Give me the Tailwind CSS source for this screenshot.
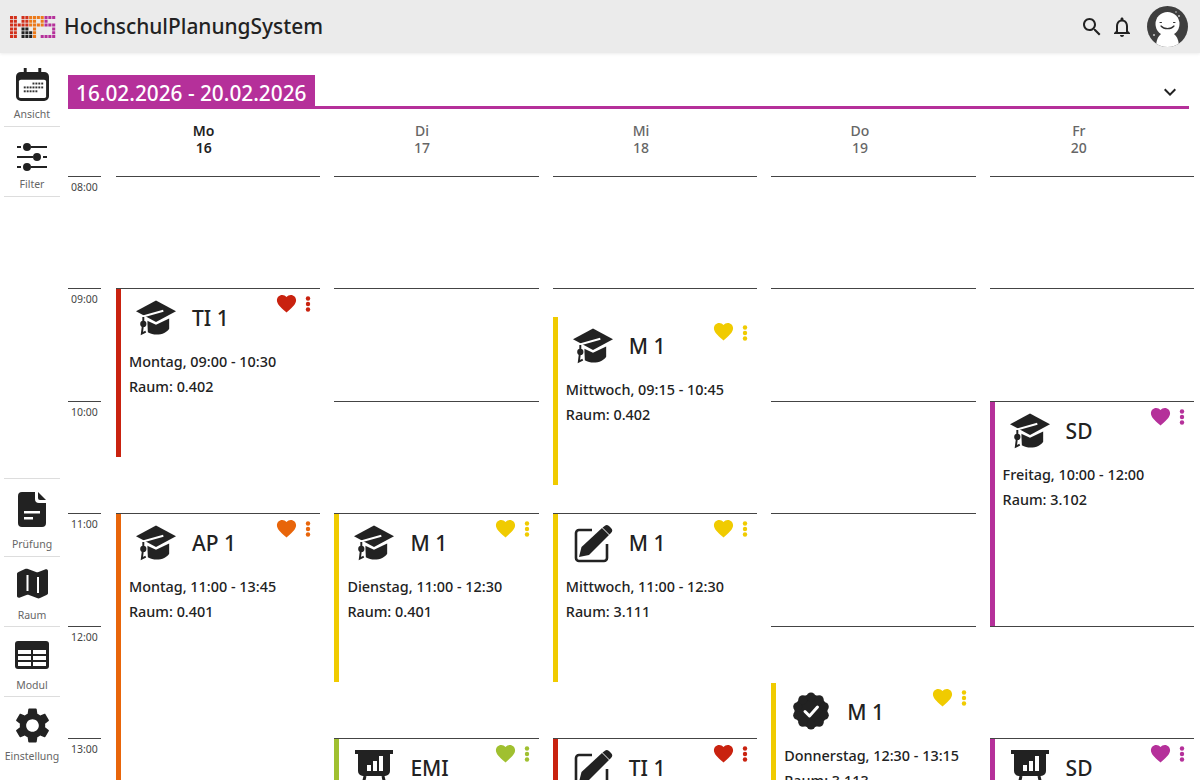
<!DOCTYPE html>
<html lang="de">
<head>
  <meta charset="UTF-8" />
  <meta name="viewport" content="width=device-width, initial-scale=1.0" />
  <title>HochschulPlanungSystem</title>
  <script src="https://cdn.jsdelivr.net/npm/@tailwindcss/browser@4"></script>
</head>
<body class="h-[780px] overflow-hidden bg-white font-['Noto_Sans',sans-serif] text-[#222]">

  <!-- Icons -->
  <svg class="hidden">
    <symbol id="heart" viewBox="0 0 24 24"><path fill="currentColor" d="M12 21.35l-1.45-1.32C5.4 15.36 2 12.28 2 8.5 2 5.42 4.42 3 7.5 3c1.74 0 3.41.81 4.5 2.09C13.09 3.81 14.76 3 16.5 3 19.58 3 22 5.42 22 8.5c0 3.78-3.4 6.86-8.55 11.54L12 21.35z"/></symbol>
    <symbol id="dots" viewBox="0 0 6 16"><g fill="currentColor"><circle cx="3" cy="2.500" r="2.200"/><circle cx="3" cy="8" r="2.200"/><circle cx="3" cy="13.500" r="2.200"/></g></symbol>
    <symbol id="cap" viewBox="0 0 41 40">
      <path fill="#222" d="M20.500 1 41 12 20.500 23 0 12z"/>
      <path fill="#222" d="M11 21.500 20.500 26 34 19.500V30c-2 3.500-7 6-13 6-3 0-6-.8-9-2.500z"/>
      <path fill="none" stroke="#fff" stroke-width="2" d="M28 11.500 7 17.500 11 21"/>
      <path fill="none" stroke="#fff" stroke-width="1.500" d="M11 21v15"/>
      <circle cx="7.500" cy="25" r="3.200" fill="#222"/>
      <path fill="none" stroke="#222" stroke-width="2" d="M7.500 18v6M7 27l-1 8 4-2"/>
    </symbol>
    <symbol id="edit" viewBox="0 0 40 40">
      <path fill="none" stroke="#222" stroke-width="2.600" stroke-linejoin="round" d="M19 6H6a3 3 0 0 0-3 3v25a3 3 0 0 0 3 3h25a3 3 0 0 0 3-3V20"/>
      <path fill="#222" d="M29 4 36 11 16 31 6 33 8.500 23z"/>
      <path fill="#222" d="M31 2.500a3.500 3.500 0 0 1 5-.5l2 2a3.500 3.500 0 0 1 0 5l-1.500 1.500-7-7z"/>
    </symbol>
    <symbol id="board" viewBox="0 0 40 40">
      <path fill="#222" d="M1 1h38v4h-3v17a5 5 0 0 1-5 5H9a5 5 0 0 1-5-5V5H1z"/>
      <path fill="#fff" d="M13 16h4v6h-4zM19 12h4v10h-4zM25 7h4v15h-4z"/>
      <path fill="none" stroke="#222" stroke-width="3" d="M11 27 8 40M29 27l3 13M9 34h22"/>
    </symbol>
    <symbol id="badge" viewBox="0 0 40 40">
      <g fill="#222">
        <circle cx="20" cy="20" r="16.500"/>
        <circle cx="20" cy="6" r="4.500"/><circle cx="28.200" cy="8.700" r="4.500"/><circle cx="33.300" cy="15.700" r="4.500"/><circle cx="33.300" cy="24.300" r="4.500"/><circle cx="28.200" cy="31.300" r="4.500"/>
        <circle cx="20" cy="34" r="4.500"/><circle cx="11.800" cy="31.300" r="4.500"/><circle cx="6.700" cy="24.300" r="4.500"/><circle cx="6.700" cy="15.700" r="4.500"/><circle cx="11.800" cy="8.700" r="4.500"/>
      </g>
      <path fill="none" stroke="#fff" stroke-width="3" stroke-linecap="round" stroke-linejoin="round" d="M14 20.500l4.500 4.500 8-9"/>
    </symbol>
  </svg>

  <!-- Top bar -->
  <header class="flex h-[53px] items-center bg-[#ebebeb] pl-[10px] pr-[12px] shadow-[0_1px_3px_rgba(0,0,0,0.08)]">
    <svg width="46" height="24" viewBox="0 0 48 24" fill="none" stroke-width="3.200" stroke-dasharray="3.200 .8">
      <path stroke="#d2301c" d="M0 2h8M0 6h8M0 10h20M0 14h8M0 18h8M0 22h8M12 2h8M12 6h8"/>
      <path stroke="#222" d="M12 14h8M12 18h12M12 22h12"/>
      <path stroke="#ec7a1a" d="M20 2h16M20 6h8M32 6h4M20 10h16M24 14h4M24 18h4M24 22h4"/>
      <path stroke="#b5309a" d="M36 2h12M36 10h12M36 6h4M44 14h4M44 18h4M32 22h16"/>
    </svg>
    <span class="ml-2 text-[20.9px] leading-none font-medium text-[#222]">HochschulPlanungSystem</span>
    <div class="ml-auto flex items-center">
      <svg class="h-6 w-6" viewBox="0 0 24 24"><path fill="#222" d="M15.500 14h-.79l-.28-.27C15.410 12.590 16 11.110 16 9.500 16 5.910 13.090 3 9.500 3S3 5.910 3 9.500 5.910 16 9.500 16c1.610 0 3.090-.59 4.230-1.570l.27.28v.79l5 4.990L20.490 19l-4.990-5zm-6 0C7.010 14 5 11.990 5 9.500S7.010 5 9.500 5 14 7.010 14 9.500 11.990 14 9.500 14z"/></svg>
      <svg class="ml-[6px] h-6 w-6" viewBox="0 0 24 24"><path fill="#222" d="M12 22c1.100 0 2-.9 2-2h-4c0 1.100.9 2 2 2zm6-6v-5c0-3.070-1.630-5.640-4.500-6.320V4c0-.83-.67-1.500-1.500-1.500s-1.500.67-1.500 1.500v.68C7.640 5.360 6 7.920 6 11v5l-2 2v1h16v-1l-2-2zm-2 1H8v-6c0-2.480 1.510-4.500 4-4.500s4 2.020 4 4.500v6z"/></svg>
      <svg class="ml-[13px] h-[41px] w-[41px]" viewBox="0 0 41 41">
        <clipPath id="avatarClip"><circle cx="20.500" cy="20.500" r="20.500"/></clipPath>
        <g clip-path="url(#avatarClip)">
          <rect width="41" height="41" fill="#3f3f3f"/>
          <path fill="#fff" d="M9 41c0-10 5-15 11.500-15S32 31 32 41z"/>
          <circle cx="20.500" cy="18" r="12" fill="#fff"/>
          <path fill="none" stroke="#333" stroke-width="1.200" stroke-linecap="round" d="M14 20c3 3.500 10 3.500 13 0"/>
          <path stroke="#333" stroke-linecap="round" d="M13 16.500h1.500M26.500 16.500H28"/>
          <circle cx="32" cy="10" r="1" fill="#ccc"/><circle cx="7" cy="29" r="1" fill="#ccc"/><circle cx="29" cy="6" r=".8" fill="#ccc"/>
        </g>
      </svg>
    </div>
  </header>

  <div class="flex h-[727px] overflow-hidden">

    <!-- Side navigation -->
    <aside class="flex w-[68px] shrink-0 flex-col justify-between pb-[13px] pl-[4px] pr-[8px] text-[10.5px] leading-[15px] text-[#666]">
      <div>
        <div class="flex h-[74px] flex-col items-center border-b border-[#ddd] pt-[15px]">
          <svg class="h-[33px] w-[33px]" viewBox="0 0 34 34">
            <path fill="#222" d="M8 0h3v4h12V0h3v4h3a5 5 0 0 1 5 5v20a5 5 0 0 1-5 5H5a5 5 0 0 1-5-5V9a5 5 0 0 1 5-5h3z"/>
            <rect x="3" y="12" width="28" height="19" rx="2" fill="#fff"/>
            <g fill="#333"><rect x="17" y="15" width="2" height="2"/><rect x="20" y="15" width="2" height="2"/><rect x="23" y="15" width="2" height="2"/><rect x="26" y="15" width="2" height="2"/><rect x="8" y="19" width="2" height="2"/><rect x="11" y="19" width="2" height="2"/><rect x="14" y="19" width="2" height="2"/><rect x="17" y="19" width="2" height="2"/><rect x="20" y="19" width="2" height="2"/><rect x="23" y="19" width="2" height="2"/><rect x="26" y="19" width="2" height="2"/><rect x="8" y="23" width="2" height="2"/><rect x="11" y="23" width="2" height="2"/><rect x="14" y="23" width="2" height="2"/><rect x="17" y="23" width="2" height="2"/><rect x="20" y="23" width="2" height="2"/></g>
          </svg>
          <span class="mt-[6px]">Ansicht</span>
        </div>
        <div class="flex h-[70px] flex-col items-center border-b border-[#ddd] pt-[16px]">
          <svg class="h-[28px] w-[30px]" viewBox="0 0 30 28" fill="none" stroke="#222" stroke-width="2">
            <path d="M0 4h4M14 4h16M0 14h16M26 14h4M0 24h4M14 24h16"/>
            <circle cx="10" cy="4" r="3" fill="#222"/><circle cx="20" cy="14" r="3" fill="#222"/><circle cx="10" cy="24" r="3" fill="#222"/>
          </svg>
          <span class="mt-[6px]">Filter</span>
        </div>
      </div>
      <div class="border-t border-[#ddd]">
        <div class="flex h-[78px] flex-col items-center border-b border-[#ddd] pt-[13px]">
          <svg class="h-[35px] w-[28px]" viewBox="0 0 28 35">
            <path fill="#222" d="M4 0h13v7a4 4 0 0 0 4 4h7v20a4 4 0 0 1-4 4H4a4 4 0 0 1-4-4V4a4 4 0 0 1 4-4z"/>
            <path fill="#222" d="M20 0l8 8h-6a2 2 0 0 1-2-2z"/>
            <path fill="#fff" d="M6 19h16v2.500H6zM6 25h9v2.500H6z"/>
          </svg>
          <span class="mt-[10px]">Prüfung</span>
        </div>
        <div class="flex h-[70px] flex-col items-center border-b border-[#ddd] pt-[11px]">
          <svg class="h-[32px] w-[32px]" viewBox="0 0 32 32">
            <path fill="#222" d="M1 6c0-1 .5-1.500 1.500-2L9 1c1-.5 2-.5 3 0l8 3c1 .4 1.500.3 2.500 0L29 1.500C30.500 1 32 1.500 32 3v22c0 1-.5 1.500-1.500 2L24 30c-1 .5-2 .5-3 0l-8-3c-1-.4-1.500-.3-2.500 0L4 29.500C2.500 30 1 29.500 1 28z"/>
            <path fill="#fff" d="M10.500 7h2v16h-2zM21 9h2v16h-2z"/>
          </svg>
          <span class="mt-[8px]">Raum</span>
        </div>
        <div class="flex h-[70px] flex-col items-center border-b border-[#ddd] pt-[14px]">
          <svg class="h-[28px] w-[34px]" viewBox="0 0 34 28">
            <rect width="34" height="28" rx="3" fill="#222"/>
            <path fill="#fff" d="M3 9h13v4H3zM18 9h13v4H18zM3 15h13v4H3zM18 15h13v4H18zM3 21h13v4H3zM18 21h13v4H18z"/>
          </svg>
          <span class="mt-[9px]">Modul</span>
        </div>
        <div class="flex h-[70px] flex-col items-center pt-[10px]">
          <svg class="h-[37px] w-[37px]" viewBox="1.500 1.500 21 21"><path fill="#222" d="M19.140 12.940c.04-.3.06-.61.06-.94 0-.32-.02-.64-.07-.94l2.030-1.580c.18-.14.23-.41.12-.61l-1.920-3.320c-.12-.22-.37-.29-.59-.22l-2.390.96c-.5-.38-1.030-.7-1.620-.94l-.36-2.540c-.04-.24-.24-.41-.48-.41h-3.840c-.24 0-.43.17-.47.41l-.36 2.540c-.59.24-1.130.57-1.620.94l-2.390-.96c-.22-.08-.47 0-.59.22L2.740 8.870c-.12.21-.08.47.12.61l2.030 1.580c-.05.3-.09.63-.09.94s.02.64.07.94l-2.030 1.580c-.18.14-.23.41-.12.61l1.920 3.320c.12.22.37.29.59.22l2.390-.96c.5.38 1.030.7 1.620.94l.36 2.540c.05.24.24.41.48.41h3.840c.24 0 .44-.17.47-.41l.36-2.540c.59-.24 1.130-.56 1.620-.94l2.390.96c.22.08.47 0 .59-.22l1.920-3.320c.12-.22.07-.47-.12-.61l-2.010-1.580zM12 15.600c-1.980 0-3.600-1.620-3.600-3.600s1.620-3.600 3.600-3.600 3.600 1.620 3.600 3.600-1.620 3.600-3.600 3.600z"/></svg>
          <span class="mt-[5px] whitespace-nowrap">Einstellung</span>
        </div>
      </div>
    </aside>

    <!-- Week view -->
    <main class="min-w-0 flex-1 pt-[22px]">
      <div class="flex h-[34px] w-[1121px] items-start justify-between border-b-[3px] border-[#b5309a]">
        <div class="flex h-[31px] items-center bg-[#b5309a] pl-2 pr-[9px] pt-[5px] text-[20.8px] leading-none font-medium text-white">16.02.2026 - 20.02.2026</div>
        <svg class="mr-[7px] mt-[5px] h-6 w-6" viewBox="0 0 24 24"><path fill="#222" d="M16.590 8.590L12 13.170 7.410 8.590 6 10l6 6 6-6z"/></svg>
      </div>

      <div class="flex">
        <!-- Hours -->
        <div class="w-[48px] shrink-0 pt-[66.5px] text-[10.5px] leading-[15px] text-[#444]">
          <div class="h-[112.5px]"><div class="w-[33px] border-t border-[#444] pl-[3px] pt-[3px]">08:00</div></div>
          <div class="h-[112.5px]"><div class="w-[33px] border-t border-[#444] pl-[3px] pt-[3px]">09:00</div></div>
          <div class="h-[112.5px]"><div class="w-[33px] border-t border-[#444] pl-[3px] pt-[3px]">10:00</div></div>
          <div class="h-[112.5px]"><div class="w-[33px] border-t border-[#444] pl-[3px] pt-[3px]">11:00</div></div>
          <div class="h-[112.5px]"><div class="w-[33px] border-t border-[#444] pl-[3px] pt-[3px]">12:00</div></div>
          <div class="h-[112.5px]"><div class="w-[33px] border-t border-[#444] pl-[3px] pt-[3px]">13:00</div></div>
        </div>

        <!-- Days -->
        <div class="grid w-[1078px] shrink-0 grid-cols-5 gap-x-[14px]">

          <section>
            <div class="flex h-[66.5px] flex-col items-center pr-[29px] pt-[13px] text-sm leading-[17px] font-semibold text-[#222]"><span>Mo</span><span>16</span></div>
            <div class="relative">
              <div class="h-[112.5px] border-t border-[#444]"></div><div class="h-[112.5px] border-t border-[#444]"></div><div class="h-[112.5px] border-t border-[#444]"></div><div class="h-[112.5px] border-t border-[#444]"></div><div class="h-[112.5px] border-t border-[#444]"></div><div class="h-[112.5px] border-t border-[#444]"></div>

              <article class="absolute inset-x-0 top-[113px] h-[168px] border-l-[5px] border-[#c9220f] bg-white">
                <svg class="absolute left-[15px] top-[10px] h-10 w-10"><use href="#cap"/></svg>
                <h3 class="absolute left-[71px] top-[15px] text-[21px] leading-[28px] font-medium">TI 1</h3>
                <svg class="absolute right-[22px] top-[3px] h-[23px] w-[23px] text-[#c9220f]"><use href="#heart"/></svg>
                <svg class="absolute right-[9px] top-[7px] h-[16px] w-[6px] text-[#c9220f]"><use href="#dots"/></svg>
                <p class="absolute left-[8px] top-[60px] text-[14.4px] leading-[25px] font-medium">Montag, 09:00 - 10:30<br>Raum: 0.402</p>
              </article>

              <article class="absolute inset-x-0 top-[338px] h-[309px] border-l-[5px] border-[#e8650a] bg-white">
                <svg class="absolute left-[15px] top-[10px] h-10 w-10"><use href="#cap"/></svg>
                <h3 class="absolute left-[71px] top-[15px] text-[21px] leading-[28px] font-medium">AP 1</h3>
                <svg class="absolute right-[22px] top-[3px] h-[23px] w-[23px] text-[#e8650a]"><use href="#heart"/></svg>
                <svg class="absolute right-[9px] top-[7px] h-[16px] w-[6px] text-[#e8650a]"><use href="#dots"/></svg>
                <p class="absolute left-[8px] top-[60px] text-[14.4px] leading-[25px] font-medium">Montag, 11:00 - 13:45<br>Raum: 0.401</p>
              </article>
            </div>
          </section>

          <section>
            <div class="flex h-[66.5px] flex-col items-center pr-[29px] pt-[13px] text-sm leading-[17px] font-medium text-[#666]"><span>Di</span><span>17</span></div>
            <div class="relative">
              <div class="h-[112.5px] border-t border-[#444]"></div><div class="h-[112.5px] border-t border-[#444]"></div><div class="h-[112.5px] border-t border-[#444]"></div><div class="h-[112.5px] border-t border-[#444]"></div><div class="h-[112.5px] border-t border-[#444]"></div><div class="h-[112.5px] border-t border-[#444]"></div>

              <article class="absolute inset-x-0 top-[338px] h-[168px] border-l-[5px] border-[#f0cb00] bg-white">
                <svg class="absolute left-[15px] top-[10px] h-10 w-10"><use href="#cap"/></svg>
                <h3 class="absolute left-[71px] top-[15px] text-[21px] leading-[28px] font-medium">M 1</h3>
                <svg class="absolute right-[22px] top-[3px] h-[23px] w-[23px] text-[#f0cb00]"><use href="#heart"/></svg>
                <svg class="absolute right-[9px] top-[7px] h-[16px] w-[6px] text-[#f0cb00]"><use href="#dots"/></svg>
                <p class="absolute left-[8px] top-[60px] text-[14.4px] leading-[25px] font-medium">Dienstag, 11:00 - 12:30<br>Raum: 0.401</p>
              </article>

              <article class="absolute inset-x-0 top-[563px] h-[168px] border-l-[5px] border-[#a0c030] bg-white">
                <svg class="absolute left-[15px] top-[10px] h-10 w-10"><use href="#board"/></svg>
                <h3 class="absolute left-[71px] top-[15px] text-[21px] leading-[28px] font-medium">EMI</h3>
                <svg class="absolute right-[22px] top-[3px] h-[23px] w-[23px] text-[#a0c030]"><use href="#heart"/></svg>
                <svg class="absolute right-[9px] top-[7px] h-[16px] w-[6px] text-[#a0c030]"><use href="#dots"/></svg>
              </article>
            </div>
          </section>

          <section>
            <div class="flex h-[66.5px] flex-col items-center pr-[28px] pt-[13px] text-sm leading-[17px] font-medium text-[#666]"><span>Mi</span><span>18</span></div>
            <div class="relative">
              <div class="h-[112.5px] border-t border-[#444]"></div><div class="h-[112.5px] border-t border-[#444]"></div><div class="h-[112.5px] border-t border-[#444]"></div><div class="h-[112.5px] border-t border-[#444]"></div><div class="h-[112.5px] border-t border-[#444]"></div><div class="h-[112.5px] border-t border-[#444]"></div>

              <article class="absolute inset-x-0 top-[141px] h-[168px] border-l-[5px] border-[#f0cb00] bg-white">
                <svg class="absolute left-[15px] top-[10px] h-10 w-10"><use href="#cap"/></svg>
                <h3 class="absolute left-[71px] top-[15px] text-[21px] leading-[28px] font-medium">M 1</h3>
                <svg class="absolute right-[22px] top-[3px] h-[23px] w-[23px] text-[#f0cb00]"><use href="#heart"/></svg>
                <svg class="absolute right-[9px] top-[8px] h-[16px] w-[6px] text-[#f0cb00]"><use href="#dots"/></svg>
                <p class="absolute left-[8px] top-[60px] text-[14.4px] leading-[25px] font-medium">Mittwoch, 09:15 - 10:45<br>Raum: 0.402</p>
              </article>

              <article class="absolute inset-x-0 top-[338px] h-[168px] border-l-[5px] border-[#f0cb00] bg-white">
                <svg class="absolute left-[15px] top-[10px] h-10 w-10"><use href="#edit"/></svg>
                <h3 class="absolute left-[71px] top-[15px] text-[21px] leading-[28px] font-medium">M 1</h3>
                <svg class="absolute right-[22px] top-[3px] h-[23px] w-[23px] text-[#f0cb00]"><use href="#heart"/></svg>
                <svg class="absolute right-[9px] top-[7px] h-[16px] w-[6px] text-[#f0cb00]"><use href="#dots"/></svg>
                <p class="absolute left-[8px] top-[60px] text-[14.4px] leading-[25px] font-medium">Mittwoch, 11:00 - 12:30<br>Raum: 3.111</p>
              </article>

              <article class="absolute inset-x-0 top-[563px] h-[168px] border-l-[5px] border-[#c9220f] bg-white">
                <svg class="absolute left-[15px] top-[10px] h-10 w-10"><use href="#edit"/></svg>
                <h3 class="absolute left-[71px] top-[15px] text-[21px] leading-[28px] font-medium">TI 1</h3>
                <svg class="absolute right-[22px] top-[3px] h-[23px] w-[23px] text-[#c9220f]"><use href="#heart"/></svg>
                <svg class="absolute right-[9px] top-[7px] h-[16px] w-[6px] text-[#c9220f]"><use href="#dots"/></svg>
              </article>
            </div>
          </section>

          <section>
            <div class="flex h-[66.5px] flex-col items-center pr-[27px] pt-[13px] text-sm leading-[17px] font-medium text-[#666]"><span>Do</span><span>19</span></div>
            <div class="relative">
              <div class="h-[112.5px] border-t border-[#444]"></div><div class="h-[112.5px] border-t border-[#444]"></div><div class="h-[112.5px] border-t border-[#444]"></div><div class="h-[112.5px] border-t border-[#444]"></div><div class="h-[112.5px] border-t border-[#444]"></div><div class="h-[112.5px] border-t border-[#444]"></div>

              <article class="absolute inset-x-0 top-[507px] h-[168px] border-l-[5px] border-[#f0cb00] bg-white">
                <svg class="absolute left-[15px] top-[8px] h-10 w-10"><use href="#badge"/></svg>
                <h3 class="absolute left-[71px] top-[15px] text-[21px] leading-[28px] font-medium">M 1</h3>
                <svg class="absolute right-[22px] top-[3px] h-[23px] w-[23px] text-[#f0cb00]"><use href="#heart"/></svg>
                <svg class="absolute right-[9px] top-[7px] h-[16px] w-[6px] text-[#f0cb00]"><use href="#dots"/></svg>
                <p class="absolute left-[8px] top-[60px] text-[14.4px] leading-[25px] font-medium">Donnerstag, 12:30 - 13:15<br>Raum: 3.113</p>
              </article>
            </div>
          </section>

          <section>
            <div class="flex h-[66.5px] flex-col items-center pr-[26px] pt-[13px] text-sm leading-[17px] font-medium text-[#666]"><span>Fr</span><span>20</span></div>
            <div class="relative">
              <div class="h-[112.5px] border-t border-[#444]"></div><div class="h-[112.5px] border-t border-[#444]"></div><div class="h-[112.5px] border-t border-[#444]"></div><div class="h-[112.5px] border-t border-[#444]"></div><div class="h-[112.5px] border-t border-[#444]"></div><div class="h-[112.5px] border-t border-[#444]"></div>

              <article class="absolute inset-x-0 top-[226px] h-[224px] border-l-[5px] border-[#b5309a] bg-white">
                <svg class="absolute left-[15px] top-[10px] h-10 w-10"><use href="#cap"/></svg>
                <h3 class="absolute left-[71px] top-[15px] text-[21px] leading-[28px] font-medium">SD</h3>
                <svg class="absolute right-[22px] top-[3px] h-[23px] w-[23px] text-[#b5309a]"><use href="#heart"/></svg>
                <svg class="absolute right-[9px] top-[7px] h-[16px] w-[6px] text-[#b5309a]"><use href="#dots"/></svg>
                <p class="absolute left-[8px] top-[60px] text-[14.4px] leading-[25px] font-medium">Freitag, 10:00 - 12:00<br>Raum: 3.102</p>
              </article>

              <article class="absolute inset-x-0 top-[563px] h-[168px] border-l-[5px] border-[#b5309a] bg-white">
                <svg class="absolute left-[15px] top-[10px] h-10 w-10"><use href="#board"/></svg>
                <h3 class="absolute left-[71px] top-[15px] text-[21px] leading-[28px] font-medium">SD</h3>
                <svg class="absolute right-[22px] top-[3px] h-[23px] w-[23px] text-[#b5309a]"><use href="#heart"/></svg>
                <svg class="absolute right-[9px] top-[7px] h-[16px] w-[6px] text-[#b5309a]"><use href="#dots"/></svg>
              </article>
            </div>
          </section>

        </div>
      </div>
    </main>
  </div>
</body>
</html>
